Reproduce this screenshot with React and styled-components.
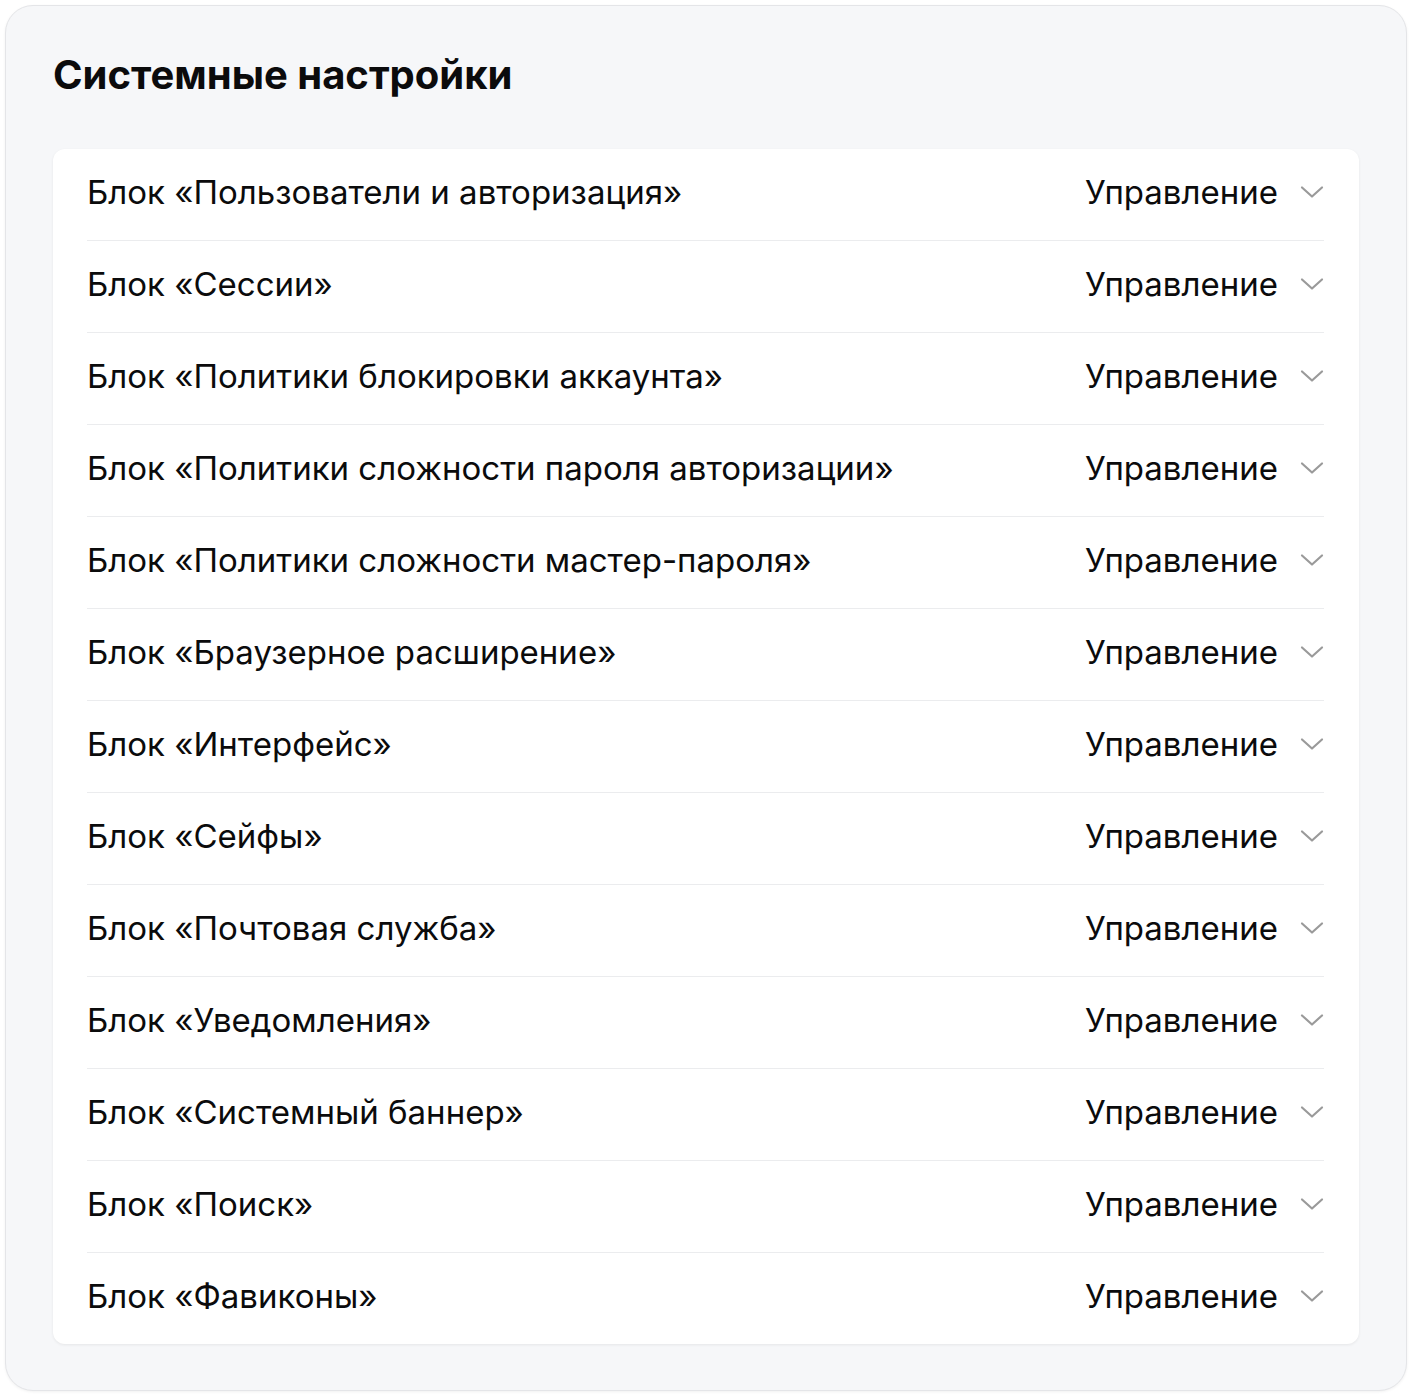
import React from 'react'
import styled, { createGlobalStyle } from 'styled-components'

const GlobalStyle = createGlobalStyle`
  html, body {
    margin: 0;
    background: #ffffff;
    font-family: Inter, "Noto Sans", sans-serif;
    color: #0b0b0c;
  }
`

const Page = styled.div`
  padding: 5px;
`

const Panel = styled.section`
  background: #f6f7f9;
  border: 1px solid #e4e5e8;
  border-radius: 28px;
  padding: 0 47px 46px;
  min-height: 1385px;
  box-sizing: border-box;
  box-shadow: 0 1px 3px rgba(0, 0, 0, 0.06);
`

const Title = styled.h1`
  margin: 0;
  height: 143px;
  box-sizing: border-box;
  padding: 0 0 6px 0;
  display: flex;
  align-items: center;
  font-size: 40px;
  font-weight: 650;
  letter-spacing: 0;
`

const List = styled.div`
  background: #ffffff;
  border-radius: 12px;
  box-shadow: 0 1px 3px rgba(0, 0, 0, 0.07);
  padding: 0 35px 0 34px;
`

const Row = styled.div`
  height: 86px;
  padding-bottom: 5px;
  display: flex;
  align-items: center;
  justify-content: space-between;
  border-bottom: ${p => (p.$last ? 'none' : '1px solid #ebecee')};
  box-sizing: content-box;
`

const Name = styled.span`
  font-size: 33px;
  font-weight: 400;
`

const Control = styled.button`
  display: flex;
  align-items: center;
  gap: 22px;
  border: none;
  background: none;
  padding: 0;
  font: inherit;
  font-size: 33px;
  color: inherit;
  cursor: pointer;
`

const Chevron = () => (
  <svg width="24" height="14" viewBox="0 0 24 14" fill="none">
    <path d="M2 2.5 L12 11.5 L22 2.5" stroke="#9a9a9a" strokeWidth="2.2" strokeLinecap="round" strokeLinejoin="round" />
  </svg>
)

const blocks = [
  'Пользователи и авторизация',
  'Сессии',
  'Политики блокировки аккаунта',
  'Политики сложности пароля авторизации',
  'Политики сложности мастер-пароля',
  'Браузерное расширение',
  'Интерфейс',
  'Сейфы',
  'Почтовая служба',
  'Уведомления',
  'Системный баннер',
  'Поиск',
  'Фавиконы',
]

export default function App() {
  return (
    <Page>
      <GlobalStyle />
      <Panel>
        <Title>Системные настройки</Title>
        <List>
          {blocks.map((b, i) => (
            <Row key={b} $last={i === blocks.length - 1}>
              <Name>Блок «{b}»</Name>
              <Control>
                Управление
                <Chevron />
              </Control>
            </Row>
          ))}
        </List>
      </Panel>
    </Page>
  )
}
